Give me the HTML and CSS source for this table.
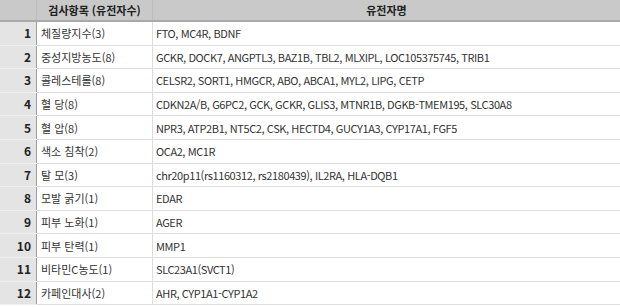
FILE: index.html
```html
<!DOCTYPE html>
<html lang="ko">
<head>
<meta charset="utf-8">
<link rel="stylesheet" href="styles.css">
</head>
<body>
<table class="gene-table">
  <thead>
    <tr>
      <th class="num"></th>
      <th class="item">검사항목 (유전자수)</th>
      <th class="genes">유전자명</th>
    </tr>
  </thead>
  <tbody>
    <tr><td class="num">1</td><td class="item">체질량지수(3)</td><td class="genes">FTO, MC4R, BDNF</td></tr>
    <tr><td class="num">2</td><td class="item">중성지방농도(8)</td><td class="genes">GCKR, DOCK7, ANGPTL3, BAZ1B, TBL2, MLXIPL, LOC105375745, TRIB1</td></tr>
    <tr><td class="num">3</td><td class="item">콜레스테롤(8)</td><td class="genes">CELSR2, SORT1, HMGCR, ABO, ABCA1, MYL2, LIPG, CETP</td></tr>
    <tr><td class="num">4</td><td class="item">혈 당(8)</td><td class="genes">CDKN2A/B, G6PC2, GCK, GCKR, GLIS3, MTNR1B, DGKB-TMEM195, SLC30A8</td></tr>
    <tr><td class="num">5</td><td class="item">혈 압(8)</td><td class="genes">NPR3, ATP2B1, NT5C2, CSK, HECTD4, GUCY1A3, CYP17A1, FGF5</td></tr>
    <tr><td class="num">6</td><td class="item">색소 침착(2)</td><td class="genes">OCA2, MC1R</td></tr>
    <tr><td class="num">7</td><td class="item">탈 모(3)</td><td class="genes">chr20p11(rs1160312, rs2180439), IL2RA, HLA-DQB1</td></tr>
    <tr><td class="num">8</td><td class="item">모발 굵기(1)</td><td class="genes">EDAR</td></tr>
    <tr><td class="num">9</td><td class="item">피부 노화(1)</td><td class="genes">AGER</td></tr>
    <tr><td class="num">10</td><td class="item">피부 탄력(1)</td><td class="genes">MMP1</td></tr>
    <tr><td class="num">11</td><td class="item">비타민C농도(1)</td><td class="genes">SLC23A1(SVCT1)</td></tr>
    <tr><td class="num">12</td><td class="item">카페인대사(2)</td><td class="genes">AHR, CYP1A1-CYP1A2</td></tr>
  </tbody>
</table>
</body>
</html>
```
FILE: styles.css
```css
html, body {
  margin: 0;
  padding: 0;
  background: #ffffff;
}
body {
  font-family: "Noto Sans CJK KR", "Noto Sans", sans-serif;
  font-size: 11px;
  color: #333333;
}
.gene-table {
  width: 620px;
  border-collapse: collapse;
  table-layout: fixed;
}
.gene-table th,
.gene-table td {
  padding: 0 4px;
  white-space: nowrap;
  overflow: hidden;
  line-height: 14px;
}
.gene-table thead th {
  height: 20px;
  background: #c9c9c9;
  font-weight: bold;
  color: #222222;
  text-align: center;
  border-bottom: 2px solid #a9a9a9;
  border-left: 1px solid #bdbdbd;
}
.gene-table thead th.num {
  border-left: none;
}
.gene-table th.num,
.gene-table td.num {
  width: 28px;
}
.gene-table th.item,
.gene-table td.item {
  width: 107px;
}
.gene-table tbody td {
  height: 22.6px;
  border-bottom: 1px solid #dedede;
  vertical-align: middle;
}
.gene-table td.num {
  background: #e4e4e4;
  text-align: right;
  font-weight: bold;
  font-size: 12px;
  color: #222222;
  padding-right: 5px;
  padding-left: 0;
  border-right: 1px solid #9e9e9e;
  border-bottom-color: #f0f0f0;
}
.gene-table td.item {
  border-right: 1px solid #dcdcdc;
}
.gene-table td.genes {
  padding-left: 3px;
  letter-spacing: -0.4px;
}
```
